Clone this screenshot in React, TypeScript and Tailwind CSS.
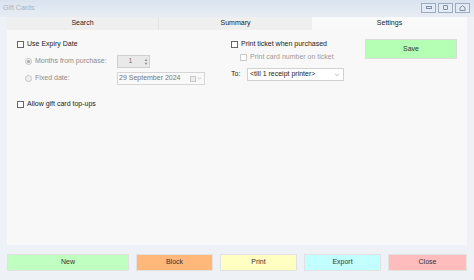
import { ChevronDown } from 'lucide-react'

function Checkbox({ disabled }: { disabled?: boolean }) {
  return (
    <span
      className={
        'inline-block w-[7px] h-[7px] border bg-white shrink-0 ' +
        (disabled ? 'border-[#c9c9c9]' : 'border-[#666]')
      }
    />
  )
}

function Radio({ checked }: { checked?: boolean }) {
  return (
    <span className="inline-flex items-center justify-center w-[7px] h-[7px] rounded-full border border-[#c4c4c4] bg-[#f0f0f0] shrink-0">
      {checked && <span className="w-[3px] h-[3px] rounded-full bg-[#a8a8a8]" />}
    </span>
  )
}

function WinButton({ children }: { children: React.ReactNode }) {
  return (
    <div className="w-[15px] h-[10px] border border-[#9aabc2] bg-[#e4ebf4] flex items-center justify-center">
      {children}
    </div>
  )
}

function ActionButton({ label, className }: { label: string; className: string }) {
  return (
    <button
      className={
        'h-[17px] border border-[#e2e2e2] text-[7px] text-[#333] flex items-center justify-center ' +
        className
      }
    >
      {label}
    </button>
  )
}

export default function App() {
  return (
    <div
      className="w-[474px] h-[280px] bg-[#eef2f7] flex flex-col overflow-hidden text-[7px] text-[#222]"
      style={{ fontFamily: '"Liberation Sans", Arial, sans-serif' }}
    >
      {/* title bar */}
      <div className="h-[17px] flex items-center justify-between pl-[3px] pr-[4px] bg-gradient-to-b from-[#d9e3ef] to-[#e8edf4]">
        <span className="text-[#aab4c2]">Gift Cards</span>
        <div className="flex gap-[2px] mt-[-2px]">
          <WinButton>
            <span className="w-[6px] h-[3px] border border-[#7d8ea6]" />
          </WinButton>
          <WinButton>
            <span className="w-[5px] h-[5px] border border-[#7d8ea6] rounded-[1px]" />
          </WinButton>
          <WinButton>
            <svg width="7" height="6" viewBox="0 0 7 6" fill="none" stroke="#7d8ea6" strokeWidth="1">
              <path d="M1 5.5V2.5L3.5 0.8L6 2.5V5.5Z" />
            </svg>
          </WinButton>
        </div>
      </div>

      {/* tabs + panel */}
      <div className="px-[7px] flex flex-col">
        <div className="flex h-[13px]">
          <div className="w-[152px] bg-[#efefef] border-r border-[#e2e2e2] flex items-center justify-center">
            Search
          </div>
          <div className="w-[153px] bg-[#efefef] flex items-center justify-center">Summary</div>
          <div className="flex-1 bg-[#f9f9f9] flex items-center justify-center">Settings</div>
        </div>

        <div className="h-[215px] bg-[#f8f8f8] flex pl-[10px] pt-[8px]">
          {/* left column */}
          <div className="w-[214px] flex flex-col">
            <div className="h-[12px] flex items-center gap-[3px]">
              <Checkbox />
              <span>Use Expiry Date</span>
            </div>
            <div className="h-[13px] mt-[5px] flex items-center">
              <div className="w-[100px] pl-[8px] flex items-center gap-[3px] text-[#8c8c8c]">
                <Radio checked />
                <span>Months from purchase:</span>
              </div>
              <div className="w-[33px] h-[13px] border border-[#cfcfcf] bg-[#e9e9e9] flex items-center">
                <span className="flex-1 text-center text-[#777]">1</span>
                <div className="w-[6px] flex flex-col items-center text-[#888] leading-none text-[4px]">
                  <span>▲</span>
                  <span>▼</span>
                </div>
              </div>
            </div>
            <div className="h-[13px] mt-[4px] flex items-center">
              <div className="w-[100px] pl-[8px] flex items-center gap-[3px] text-[#8c8c8c]">
                <Radio />
                <span>Fixed date:</span>
              </div>
              <div className="w-[88px] h-[13px] border border-[#d6d6d6] bg-[#f9f9f9] flex items-center pl-[1px] pr-[2px]">
                <span className="flex-1 text-[#777]">29 September 2024</span>
                <span className="w-[6px] h-[6px] border border-[#c8c8c8] bg-[#ececec]" />
                <ChevronDown className="w-[5px] h-[5px] text-[#aaa] ml-[1px]" strokeWidth={3} />
              </div>
            </div>
            <div className="h-[12px] mt-[13px] flex items-center gap-[3px]">
              <Checkbox />
              <span>Allow gift card top-ups</span>
            </div>
          </div>

          {/* right column */}
          <div className="w-[134px] flex flex-col">
            <div className="h-[12px] flex items-center gap-[3px]">
              <Checkbox />
              <span>Print ticket when purchased</span>
            </div>
            <div className="h-[12px] mt-[1px] pl-[9px] flex items-center gap-[3px] text-[#9a9a9a]">
              <Checkbox disabled />
              <span>Print card number on ticket</span>
            </div>
            <div className="h-[13px] mt-[5px] flex items-center">
              <span className="w-[16px]">To:</span>
              <div className="w-[97px] h-[13px] border border-[#d2d2d2] bg-white flex items-center pl-[2px] pr-[3px]">
                <span className="flex-1">&lt;till 1 receipt printer&gt;</span>
                <ChevronDown className="w-[6px] h-[6px] text-[#999]" strokeWidth={2.5} />
              </div>
            </div>
          </div>

          {/* save */}
          <div className="pt-[1px]">
            <button className="w-[92px] h-[20px] bg-[#b4ffb4] border border-[#dcdcdc] text-[7px] text-[#333] flex items-center justify-center">
              Save
            </button>
          </div>
        </div>
      </div>

      {/* bottom buttons */}
      <div className="px-[7px] pt-[9px] flex gap-[7px]">
        <ActionButton label="New" className="w-[122px] bg-[#bfffbf]" />
        <ActionButton label="Block" className="w-[77px] bg-[#ffb77a]" />
        <ActionButton label="Print" className="w-[77px] bg-[#ffffc2]" />
        <ActionButton label="Export" className="w-[77px] bg-[#c2ffff]" />
        <ActionButton label="Close" className="flex-1 bg-[#ffbcbc]" />
      </div>
    </div>
  )
}
